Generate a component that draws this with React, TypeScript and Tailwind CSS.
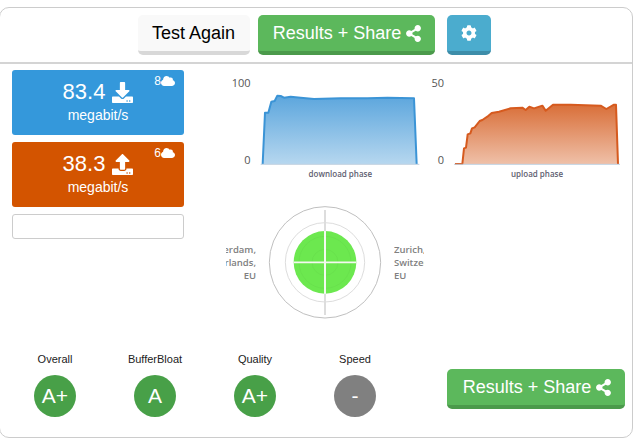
import { FaCloud, FaCog, FaDownload, FaShareAlt, FaUpload } from "react-icons/fa";

const grades = [
  { label: "Overall", value: "A+", color: "bg-[#48a048]" },
  { label: "BufferBloat", value: "A", color: "bg-[#48a048]" },
  { label: "Quality", value: "A+", color: "bg-[#48a048]" },
  { label: "Speed", value: "-", color: "bg-[#808080]" },
];

const downloadLine =
  "146,297 153,143 163,143 172,110 182,108 190,92 200,93 210,98 230,95 260,98 300,102 380,100 460,100 520,98 600,100 608,297";
const uploadLine =
  "93,297 115,297 120,250 126,248 131,208 139,205 144,190 152,187 167,168 175,165 190,155 203,144 225,140 260,130 295,128 305,135 316,125 330,130 355,122 365,137 387,119 440,119 530,122 547,132 570,119 576,119 582,297";

function SpeedBox({ value, count, color, icon }: { value: string; count: string; color: string; icon: React.ReactNode }) {
  return (
    <div className={`relative flex h-[65px] flex-col items-center rounded-[3px] pt-[9px] text-white ${color}`}>
      <div className="flex items-center gap-[7px] text-[22px] leading-[26px]">
        <span>{value}</span>
        {icon}
      </div>
      <div className="text-[14px] leading-[20px]">megabit/s</div>
      <div className="absolute top-[3px] right-[9px] flex items-center text-[12px] leading-[16px]">
        <span>{count}</span>
        <FaCloud className="text-[14px]" />
      </div>
    </div>
  );
}

function Chart({ id, top, line, caption, captionX, axisX, stroke, from, to, baseStart, baseEnd }: {
  id: string; top: string; line: string; caption: string; captionX: number; axisX: number;
  stroke: string; from: string; to: string; baseStart: number; baseEnd: number;
}) {
  return (
    <svg viewBox="0 0 630 375" className="h-[125px] w-[210px] shrink-0">
      <defs>
        <linearGradient id={id} x1="0" y1="0" x2="0" y2="1">
          <stop offset="0" stopColor={from} />
          <stop offset="1" stopColor={to} />
        </linearGradient>
      </defs>
      <polygon points={line} fill={`url(#${id})`} />
      <polyline points={line} fill="none" stroke={stroke} strokeWidth="6" strokeLinejoin="round" />
      <line x1={baseStart} x2={baseEnd} y1="298" y2="298" stroke="#c0d0e0" strokeWidth="3" />
      <g fontFamily='"Open Sans", sans-serif' fontSize="33" fill="#555555" textAnchor="end">
        <text x={axisX} y="65">{top}</text>
        <text x={axisX} y="296">0</text>
      </g>
      <text x={captionX} y="336" textAnchor="middle" fontFamily='"Open Sans", sans-serif' fontSize="24" fontWeight="600" fill="#606070">
        {caption}
      </text>
    </svg>
  );
}

function Polar() {
  return (
    <svg viewBox="108 0 414 375" className="h-[125px] w-[138px] shrink-0">
      <circle cx="315" cy="187" r="167" fill="none" stroke="#c0c0c0" strokeWidth="3" />
      <circle cx="315" cy="187" r="119" fill="none" stroke="#dddddd" strokeWidth="3" />
      <circle cx="315" cy="187" r="94" fill="#6ce84f" />
      <circle cx="315" cy="187" r="78" fill="none" stroke="#66de4b" strokeWidth="2" />
      <circle cx="315" cy="187" r="39" fill="none" stroke="#66de4b" strokeWidth="2" />
      <line x1="315" x2="315" y1="30" y2="345" stroke="#dddddd" strokeWidth="6" />
      <line x1="315" x2="315" y1="93" y2="281" stroke="#f4f8f0" strokeWidth="6" />
      <line x1="221" x2="409" y1="187" y2="187" stroke="#f4f8f0" strokeWidth="5" />
    </svg>
  );
}

function ShareButton({ width }: { width: string }) {
  return (
    <button className={`flex h-[40px] items-center justify-center gap-[4px] rounded-[5px] border-b-[4px] border-[#4b9a4b] bg-[#5cb85c] pl-[3px] text-[18px] text-white ${width}`}>
      Results + Share
      <FaShareAlt className="text-[17px]" />
    </button>
  );
}

export default function App() {
  return (
    <div className="h-[441px] w-[634px] overflow-hidden bg-white pt-[7px] font-['Liberation_Sans',sans-serif]">
      <div className="-ml-px h-[431px] w-[634px] rounded-[10px] border border-[#cccccc]">
        <div className="flex h-[56px] items-start justify-center gap-[8px] border-b-2 border-[#d4d4d4] pt-[7px] pr-[4px]">
          <button className="h-[40px] w-[112px] rounded-[5px] border-b-[4px] border-[#d8d8d8] bg-[#f9f9f9] text-[18px] text-black">
            Test Again
          </button>
          <ShareButton width="w-[177px]" />
          <button className="ml-[4px] flex h-[40px] w-[44px] items-center justify-center rounded-[5px] border-b-[4px] border-[#3d8da9] bg-[#4bacce] text-[16px] text-white">
            <FaCog />
          </button>
        </div>

        <div className="flex h-[289px]">
          <div className="mt-[6px] ml-[12px] flex w-[172px] shrink-0 flex-col gap-[7px]">
            <SpeedBox value="83.4" count="8" color="bg-[#3498db]" icon={<FaDownload className="text-[21px]" />} />
            <SpeedBox value="38.3" count="6" color="bg-[#d35400]" icon={<FaUpload className="text-[21px]" />} />
            <div className="h-[25px] rounded-[3px] border border-[#cccccc]" />
          </div>
          <div className="ml-[30px] flex flex-col pt-[1px]">
            <div className="flex">
              <Chart id="down" top="100" line={downloadLine} caption="download phase" captionX={379} axisX={110} stroke="#3b94d6" from="#5ca6dd" to="#b6d7ef" baseStart={140} baseEnd={616} />
              <Chart id="up" top="50" line={uploadLine} caption="upload phase" captionX={339} axisX={60} stroke="#d65a1e" from="#d96f39" to="#efc0a8" baseStart={90} baseEnd={588} />
            </div>
            <div className="mt-[10px] flex pl-[12px] text-[9.5px] leading-[13px] font-semibold text-[#808080] font-['Open_Sans',sans-serif]">
              <div className="flex h-[125px] w-[30px] items-center justify-end overflow-hidden">
                <div className="shrink-0 text-right whitespace-nowrap">Amsterdam,<br />Netherlands,<br />EU</div>
              </div>
              <Polar />
              <div className="flex h-[125px] w-[30px] items-center overflow-hidden">
                <div className="shrink-0 whitespace-nowrap">Zurich,<br />Switzerland,<br />EU</div>
              </div>
            </div>
          </div>
        </div>

        <div className="flex items-end justify-between pr-[7px] pl-[5px]">
          <div className="flex">
            {grades.map((g) => (
              <div key={g.label} className="flex w-[100px] flex-col items-center">
                <div className="text-[11px] leading-[12px] text-[#222222]">{g.label}</div>
                <div className={`mt-[10px] flex h-[42px] w-[42px] items-center justify-center rounded-full text-[21px] text-white ${g.color}`}>
                  {g.value}
                </div>
              </div>
            ))}
          </div>
          <div className="mb-[8px]">
            <ShareButton width="w-[178px]" />
          </div>
        </div>
      </div>
    </div>
  );
}
